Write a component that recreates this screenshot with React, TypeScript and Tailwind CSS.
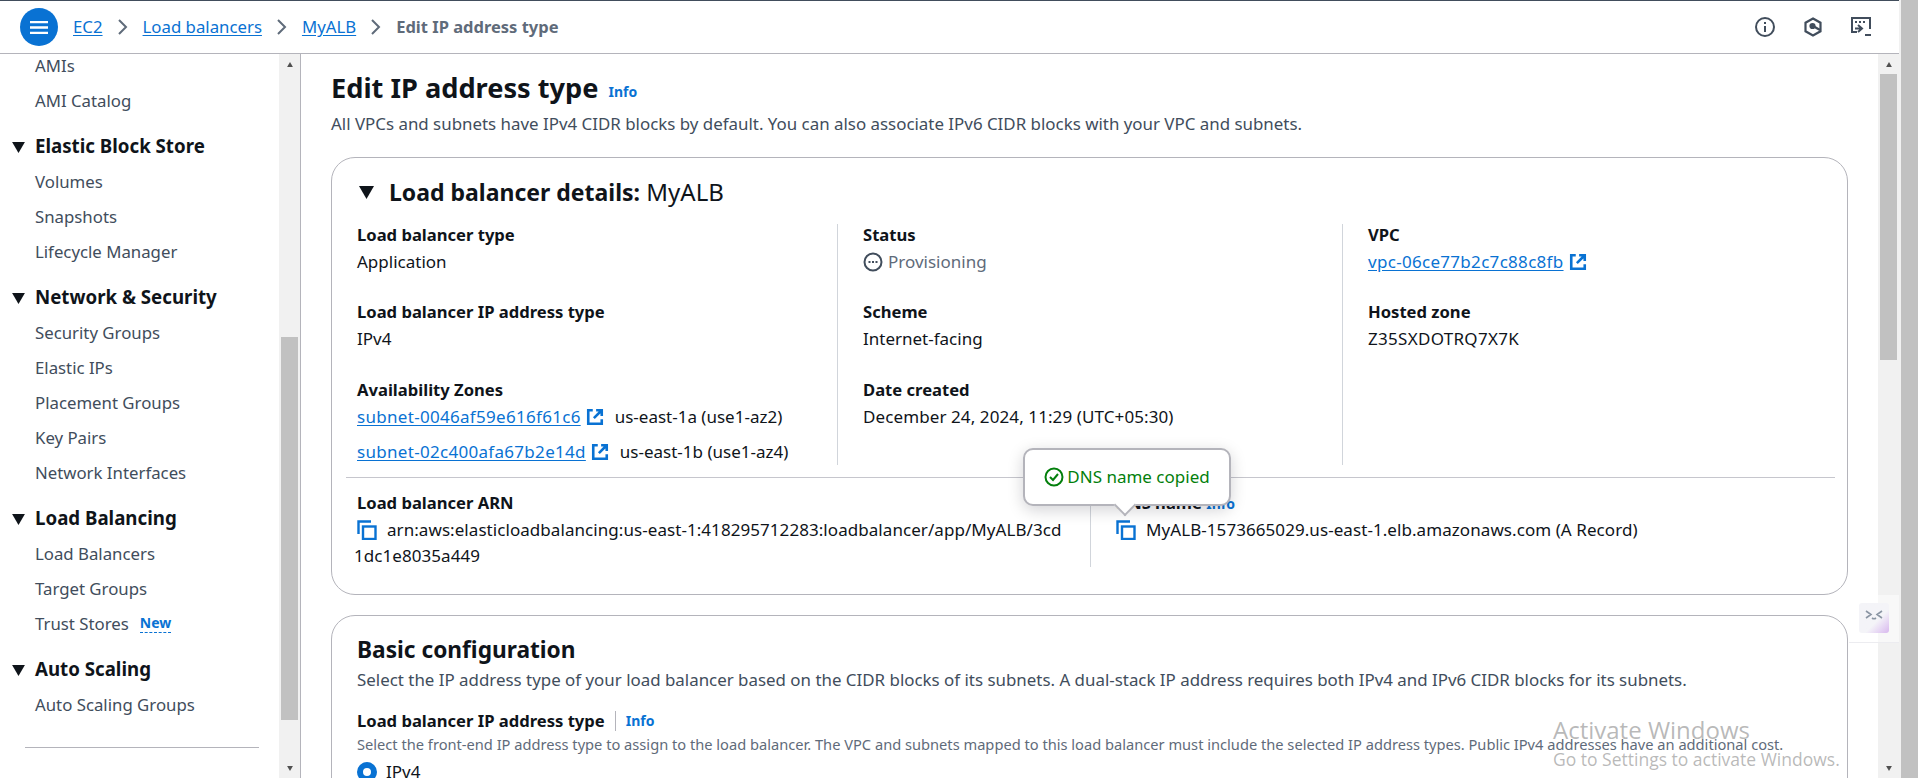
const navGroups = [
  { title: "", items: ["AMIs", "AMI Catalog"] },
  { title: "Elastic Block Store", items: ["Volumes", "Snapshots", "Lifecycle Manager"] },
  { title: "Network & Security", items: ["Security Groups", "Elastic IPs", "Placement Groups", "Key Pairs", "Network Interfaces"] },
  { title: "Load Balancing", items: ["Load Balancers", "Target Groups", "Trust Stores"] },
  { title: "Auto Scaling", items: ["Auto Scaling Groups"] },
];

const Caret = ({ className = "" }: { className?: string }) => (
  <svg viewBox="0 0 14 12" className={className} fill="currentColor">
    <path d="M0 0h14L7 12z" />
  </svg>
);

const ExternalIcon = () => (
  <svg viewBox="0 0 16 16" className="w-[18px] h-[18px] text-[#0972d3] shrink-0" fill="none" stroke="currentColor" strokeWidth="2.3">
    <path d="M6 2H2v12h12v-4M9 2h5v5M14 2 7 9" />
  </svg>
);

const CopyIcon = () => (
  <svg viewBox="0 0 20 20" className="w-5 h-5 text-[#0972d3] shrink-0" fill="none" stroke="currentColor" strokeWidth="2.4">
    <path d="M14 1.500H1.500V14" />
    <rect x="6" y="6.500" width="12.500" height="12.500" />
  </svg>
);

const Field = ({ label, children }: { label: string; children: React.ReactNode }) => (
  <div>
    <div className="h-[22px] leading-[22px] text-[16.6px] font-bold">{label}</div>
    <div className="mt-[5px] leading-[22px]">{children}</div>
  </div>
);

const Link = ({ children }: { children: React.ReactNode }) => (
  <a className="text-[#0972d3] underline underline-offset-2">{children}</a>
);

const Subnet = ({ id, zone }: { id: string; zone: string }) => (
  <div className="flex items-center h-[22px]">
    <span className="tracking-[0.3px]"><Link>{id}</Link></span>
    <span className="ml-[5px]"><ExternalIcon /></span>
    <span className="ml-[11px]">{zone}</span>
  </div>
);

const Scrollbar = ({ thumbTop, thumbHeight }: { thumbTop: string; thumbHeight: string }) => (
  <div className="w-[21px] shrink-0 bg-[#f1f1f1] flex flex-col items-center">
    <div className="h-[20px] flex items-center justify-center shrink-0">
      <Caret className="w-2 h-[5px] rotate-180 text-[#505050]" />
    </div>
    <div className={`${thumbTop} ${thumbHeight} w-[17px] bg-[#c1c1c1] shrink-0`} />
    <div className="flex-1" />
    <div className="h-[20px] flex items-center justify-center shrink-0">
      <Caret className="w-2 h-[5px] text-[#505050]" />
    </div>
  </div>
);

const Sidebar = () => (
  <aside className="w-[301px] shrink-0 flex border-r border-[#b4b4bb] overflow-hidden">
    <nav className="w-[279px] shrink-0 overflow-hidden">
      <div className="-mt-[6px] pl-[35px] text-[16.8px] text-[#414d5c]">
        {navGroups.map((group) => (
          <div key={group.title || "images"}>
            {group.title && (
              <div className="relative mt-[11px] h-[35px] flex items-center text-[18.7px] font-bold text-[#0f141a]">
                <Caret className="absolute -left-[23px] top-[13px] w-[13px] h-[11px]" />
                {group.title}
              </div>
            )}
            {group.items.map((item) => (
              <div key={item} className="h-[35px] flex items-center">
                {item}
                {item === "Trust Stores" && (
                  <span className="ml-[11px] text-[14px] leading-[18px] font-bold text-[#0972d3] border-b border-dashed border-[#0972d3]">New</span>
                )}
              </div>
            ))}
          </div>
        ))}
        <div className="-ml-[10px] mt-[25px] w-[234px] border-t border-[#b4b4bb]" />
      </div>
    </nav>
    <Scrollbar thumbTop="mt-[263px]" thumbHeight="h-[383px]" />
  </aside>
);

const Header = () => (
  <header className="h-[52px] shrink-0 flex items-center border-b border-[#b4b4bb] pl-[20px] pr-[28px] bg-white box-content">
    <button className="w-[38px] h-[38px] rounded-full bg-[#0972d3] flex items-center justify-center">
      <svg viewBox="0 0 20 16" className="w-[18px] h-[15px]" stroke="white" strokeWidth="2.6">
        <path d="M0 2h20M0 8h20M0 14h20" />
      </svg>
    </button>
    <div className="ml-[15px] flex items-center text-[16.8px]">
      {["EC2", "Load balancers", "MyALB"].map((crumb) => (
        <div key={crumb} className="flex items-center">
          <Link>{crumb}</Link>
          <svg viewBox="0 0 10 16" className="w-[10px] h-[16px] mx-[15px]" fill="none" stroke="#5f6b7a" strokeWidth="2">
            <path d="m1 1 7 7-7 7" />
          </svg>
        </div>
      ))}
      <span className="text-[16.500px] font-bold text-[#5f6b7a]">Edit IP address type</span>
    </div>
    <div className="ml-auto flex items-center gap-[28px] text-[#414d5c]">
      <svg viewBox="0 0 20 20" className="w-5 h-5" fill="none" stroke="currentColor" strokeWidth="2">
        <circle cx="10" cy="10" r="9" />
        <path d="M10 9v6M10 5v2" />
      </svg>
      <svg viewBox="0 0 20 20" className="w-5 h-5" fill="none" stroke="currentColor" strokeWidth="2.2">
        <path d="M10 1.500 17.500 5.700v8.600L10 18.500 2.500 14.300V5.700z" />
        <path d="m10 9 7 4" />
        <circle cx="9.500" cy="9" r="2" fill="currentColor" />
      </svg>
      <svg viewBox="0 0 20 20" className="w-5 h-5" fill="none" stroke="currentColor" strokeWidth="2">
        <path d="M6 15H1V1h18v11" />
        <path d="M4 5h2M8 5h2M12 5h2" />
        <path d="m7 8 4 3.500L7 15M4 11.500h7M14 18h6" />
      </svg>
    </div>
  </header>
);

const DetailsCard = () => (
  <section className="relative h-[438px] border border-[#b4b4bb] rounded-[24px] pl-[14px] pr-[12px]">
    <div className="h-[66px] pt-[19px] flex items-start pl-[13px]">
      <div className="flex items-center h-[30px]">
        <Caret className="w-[15px] h-[13px] text-[#0f141a]" />
        <h2 className="ml-[15px] text-[24px] leading-[30px]">
          <span className="text-[23px] font-bold">Load balancer details:</span> MyALB
        </h2>
      </div>
    </div>
    <div className="flex h-[241px] pl-[11px]">
      <div className="w-[480px] flex flex-col gap-[28px]">
        <Field label="Load balancer type">Application</Field>
        <Field label="Load balancer IP address type">IPv4</Field>
        <div className="pt-px">
          <div className="h-[22px] leading-[22px] text-[16.6px] font-bold">Availability Zones</div>
          <div className="mt-[5px] flex flex-col gap-[13px]">
            <Subnet id="subnet-0046af59e616f61c6" zone="us-east-1a (use1-az2)" />
            <Subnet id="subnet-02c400afa67b2e14d" zone="us-east-1b (use1-az4)" />
          </div>
        </div>
      </div>
      <div className="w-[505px] border-l border-[#d1d5db] pl-[25px] flex flex-col gap-[28px]">
        <Field label="Status">
          <span className="flex items-center text-[#5f6b7a]">
            <svg viewBox="0 0 20 20" className="w-[20px] h-[20px] mr-[5px] text-[#414d5c]" fill="none" stroke="currentColor" strokeWidth="2">
              <circle cx="10" cy="10" r="8.500" />
              <path d="M5.500 10h2M9 10h2M12.500 10h2" />
            </svg>
            Provisioning
          </span>
        </Field>
        <Field label="Scheme">Internet-facing</Field>
        <div className="pt-px">
          <Field label="Date created"><span className="tracking-[0.1px]">December 24, 2024, 11:29 (UTC+05:30)</span></Field>
        </div>
      </div>
      <div className="border-l border-[#d1d5db] pl-[25px] flex flex-col gap-[28px]">
        <Field label="VPC">
          <span className="flex items-center tracking-[0.3px]">
            <Link>vpc-06ce77b2c7c88c8fb</Link>
            <span className="ml-[5px]"><ExternalIcon /></span>
          </span>
        </Field>
        <Field label="Hosted zone"><span className="tracking-[0.3px]">Z35SXDOTRQ7X7K</span></Field>
      </div>
    </div>
    <div className="mt-[12px] border-t border-[#c6c6cd]" />
    <div className="mt-[11px] flex h-[78px] pl-[11px]">
      <div className="w-[733px] pt-[3px]">
        <div className="h-[22px] leading-[22px] text-[16.6px] font-bold">Load balancer ARN</div>
        <div className="mt-[3px] leading-[26px] -ml-[3px] tracking-[0.06px]">
          <span className="inline-flex items-center align-top h-[26px]">
            <span className="ml-[3px] mr-[10px]"><CopyIcon /></span>
            arn:aws:elasticloadbalancing:us-east-1:418295712283:loadbalancer/app/MyALB/3cd
          </span>
          <br />
          1dc1e8035a449
        </div>
      </div>
      <div className="relative border-l border-[#d1d5db] pl-[25px] pt-[3px]">
        <div className="h-[22px] leading-[22px] text-[16.6px] font-bold">
          DNS name <span className="text-[14px] text-[#0972d3]">Info</span>
        </div>
        <div className="mt-[3px] flex items-center h-[26px] tracking-[0.07px]">
          <span className="mr-[10px]"><CopyIcon /></span>
          MyALB-1573665029.us-east-1.elb.amazonaws.com (A Record)
        </div>
        {/* Copied popover */}
        <div className="absolute -left-[68px] -top-[41px] w-[208px] h-[58px] bg-white border-2 border-[#b4b4bb] rounded-[10px] shadow-[0_4px_16px_rgba(0,7,22,0.18)] flex items-center justify-center text-[#037f0c]">
          <svg viewBox="0 0 20 20" className="w-[20px] h-[20px] mr-[3px]" fill="none" stroke="currentColor" strokeWidth="2">
            <circle cx="10" cy="10" r="8.500" />
            <path d="m6 10 3 3 5-6" />
          </svg>
          DNS name copied
          <div className="absolute left-[92px] -bottom-[9px] w-[16px] h-[16px] bg-white border-r-2 border-b-2 border-[#b4b4bb] rotate-45" />
        </div>
      </div>
    </div>
  </section>
);

const BasicCard = () => (
  <section className="mt-[20px] border border-[#b4b4bb] rounded-[24px] pl-[25px] pr-[15px] pt-[18px] h-[300px]">
    <h2 className="text-[22.700px] leading-[32px] font-bold text-[#0f141a]">Basic configuration</h2>
    <p className="leading-[22px] mt-[3px] text-[16.900px] text-[#414d5c]">
      Select the IP address type of your load balancer based on the CIDR blocks of its subnets. A dual-stack IP address requires both IPv4 and IPv6 CIDR blocks for its subnets.
    </p>
    <div className="mt-[19px] flex items-center h-[22px]">
      <span className="text-[16.6px] font-bold">Load balancer IP address type</span>
      <span className="ml-[10px] pl-[10px] border-l border-[#b4b4bb] text-[14px] leading-[20px] font-bold text-[#0972d3]">Info</span>
    </div>
    <p className="mt-[2px] text-[14.650px] leading-[20px] text-[#5f6b7a]">
      Select the front-end IP address type to assign to the load balancer. The VPC and subnets mapped to this load balancer must include the selected IP address types. Public IPv4 addresses have an additional cost.
    </p>
    <div className="mt-[5px] flex items-center">
      <span className="w-[20px] h-[20px] rounded-full border-[6px] border-[#0972d3] bg-white" />
      <span className="ml-[9px]">IPv4</span>
    </div>
  </section>
);

export default function App() {
  return (
    <div className="relative h-[778px] w-[1918px] overflow-hidden flex bg-[#f1f1f1] font-['Noto_Sans',sans-serif] text-[17px] text-[#0f141a]">
      <div className="w-[1899px] flex flex-col bg-white">
        <div className="h-px bg-[#414d5c] shrink-0" />
        <Header />
        <div className="flex-1 min-h-0 flex">
          <Sidebar />
          <main className="w-[1577px] shrink-0 overflow-hidden pl-[30px] pr-[30px]">
            <div className="mt-[15px] h-[38px] flex items-center">
              <h1 className="text-[27.200px] leading-[36px] font-bold">Edit IP address type</h1>
              <span className="ml-[10px] mt-[6px] text-[14px] font-bold text-[#0972d3]">Info</span>
            </div>
            <p className="mt-[6px] mb-[22px] leading-[22px] text-[16.900px] text-[#414d5c]">
              All VPCs and subnets have IPv4 CIDR blocks by default. You can also associate IPv6 CIDR blocks with your VPC and subnets.
            </p>
            <DetailsCard />
            <BasicCard />
          </main>
          <Scrollbar thumbTop="mt-0" thumbHeight="h-[286px]" />
        </div>
      </div>
      <div className="ml-[2px] w-[17px] bg-[#c1c1c1]" />

      {/* Feedback widget */}
      <div className="absolute left-[1849px] top-[595px] w-[50px] h-[48px] bg-white/50 border-b border-[#ececf0] flex items-start justify-start pl-[10px] pt-[8px]">
        <div className="w-[30px] h-[30px] rounded-[3px] bg-gradient-to-br from-[#f4f4f8] from-60% to-[#d8b8ee] flex items-center justify-center">
          <svg viewBox="0 0 30 30" className="w-[30px] h-[30px]" fill="none" stroke="#8a95a3" strokeWidth="1.6">
            <path d="m7 8 5 3.500-5 3.500M23 8l-5 3.500 5 3.500M13 15q2 1.500 4 0" />
          </svg>
        </div>
      </div>

      {/* Windows watermark */}
      <div className="absolute left-[1553px] top-[714px] text-[#8a8a8a]/60 font-['Open_Sans',sans-serif] pointer-events-none">
        <div className="text-[24px] leading-[32px]">Activate Windows</div>
        <div className="text-[17.500px] leading-[24px] mt-[1px]">Go to Settings to activate Windows.</div>
      </div>
    </div>
  );
}
